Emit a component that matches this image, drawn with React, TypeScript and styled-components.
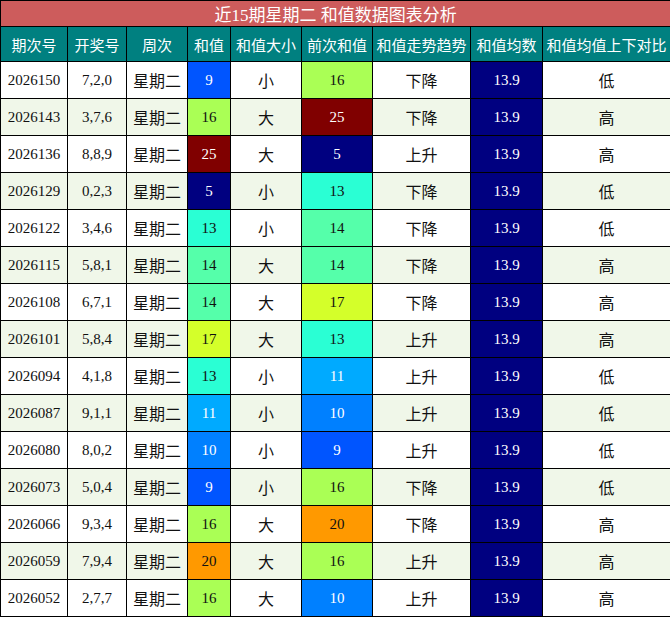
import React from "react";
import styled, { createGlobalStyle } from "styled-components";

const G = createGlobalStyle`
  body { margin: 0; background: #fff; }
`;
const Table = styled.table`
  width: 670px; border-collapse: collapse; table-layout: fixed;
  font-family: "Liberation Serif", "Noto Sans CJK SC", serif; font-size: 15px;
  td, th { border: 1px solid #000; text-align: center; padding: 0; }
`;
const Title = styled.th`
  background: #cd5c5c; color: #fff; height: 25px; font-weight: normal; font-size: 17px;
`;
const Head = styled.th`
  background: #008080; color: #fff; height: 34px; font-weight: normal; font-size: 15px;
`;
const Row = styled.tr<{ $alt: boolean }>`
  background: ${p => (p.$alt ? "#f0f7e9" : "#fff")};
  td { height: 36px; color: #111; }
`;
const Cell = styled.td<{ $bg?: string; $fg?: string; $big?: boolean }>`
  ${p => (p.$bg ? `background: ${p.$bg};` : "")}
  ${p => (p.$fg ? `color: ${p.$fg} !important;` : "")}
  ${p => (p.$big ? "font-size: 16px;" : "")}
`;
const colors: Record<number, [string, string]> = {
  5: ["#000080", "#fff"], 9: ["#0055ff", "#fff"], 10: ["#0080ff", "#fff"], 11: ["#00aaff", "#fff"],
  13: ["#2affd4", "#111"], 14: ["#55ffaa", "#111"], 16: ["#aaff55", "#111"], 17: ["#d4ff2a", "#111"],
  20: ["#ff9900", "#111"], 25: ["#800000", "#fff"],
};
const data: [string, string, number, number, string, string][] = [
  ["2026150","7,2,0",9,16,"下降","低"],["2026143","3,7,6",16,25,"下降","高"],["2026136","8,8,9",25,5,"上升","高"],
  ["2026129","0,2,3",5,13,"下降","低"],["2026122","3,4,6",13,14,"下降","低"],["2026115","5,8,1",14,14,"下降","高"],
  ["2026108","6,7,1",14,17,"下降","高"],["2026101","5,8,4",17,13,"上升","高"],["2026094","4,1,8",13,11,"上升","低"],
  ["2026087","9,1,1",11,10,"上升","低"],["2026080","8,0,2",10,9,"上升","低"],["2026073","5,0,4",9,16,"下降","低"],
  ["2026066","9,3,4",16,20,"下降","高"],["2026059","7,9,4",20,16,"上升","高"],["2026052","2,7,7",16,10,"上升","高"],
];
const widths = [67,59,61,43,71,71,98,72,128];
const heads = ["期次号","开奖号","周次","和值","和值大小","前次和值","和值走势趋势","和值均数","和值均值上下对比"];
export default function App() {
  return (
    <>
      <G />
      <Table>
        <colgroup>{widths.map((w, i) => <col key={i} style={{ width: w }} />)}</colgroup>
        <thead>
          <tr><Title colSpan={9}>近15期星期二 和值数据图表分析</Title></tr>
          <tr>{heads.map(h => <Head key={h}>{h}</Head>)}</tr>
        </thead>
        <tbody>
          {data.map((d, i) => (
            <Row key={d[0]} $alt={i % 2 === 1}>
              <Cell>{d[0]}</Cell>
              <Cell>{d[1]}</Cell>
              <Cell $big>星期二</Cell>
              <Cell $bg={colors[d[2]][0]} $fg={colors[d[2]][1]}>{d[2]}</Cell>
              <Cell $big>{d[2] >= 14 ? "大" : "小"}</Cell>
              <Cell $bg={colors[d[3]][0]} $fg={colors[d[3]][1]}>{d[3]}</Cell>
              <Cell $big>{d[4]}</Cell>
              <Cell $bg="#000080" $fg="#fff">13.9</Cell>
              <Cell $big>{d[5]}</Cell>
            </Row>
          ))}
        </tbody>
      </Table>
    </>
  );
}
